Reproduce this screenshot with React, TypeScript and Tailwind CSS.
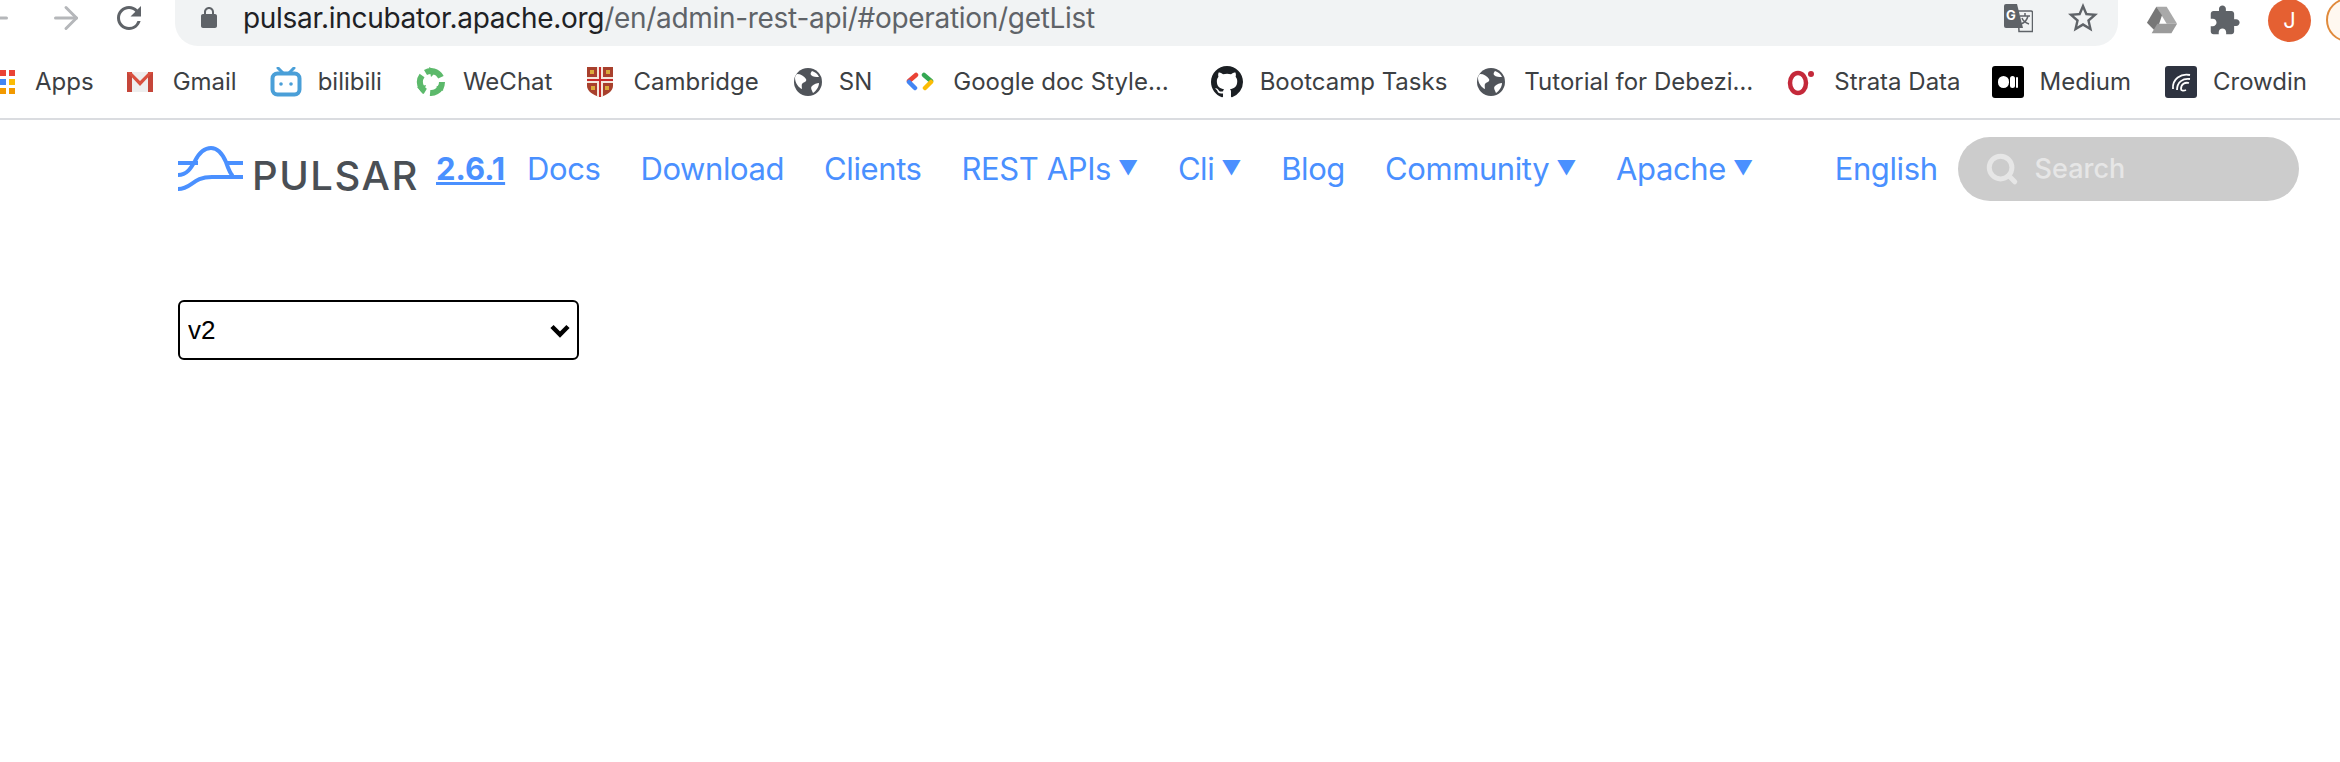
import React from 'react';
import { ArrowLeft, ArrowRight, Search } from 'lucide-react';

function Globe() {
  return (
    <svg width="28" height="28" viewBox="0 0 28 28">
      <circle cx="14" cy="14" r="14" fill="#50545a" />
      <path d="M3 6c4 0 7 2 9 5 1 2-1 3-3 4-2 1-1 4-1 6-3-1-7-6-7-11 0-2 1-3 2-4zM18 3c3 1 6 3 7 6-3 0-6 0-8-2-1-1 0-3 1-4zM25 15c0 4-3 8-6 10-1-3-3-5-1-7 2-2 5-3 7-3z" fill="#fff" />
    </svg>
  );
}

function AppsIcon() {
  const colors = ['#ea4335', '#ea4335', '#4285f4', '#fbbc05', '#f29900', '#f29900'];
  return (
    <div className="grid grid-cols-2 gap-[3px] w-[15px] -ml-[5px]">
      {colors.map((c, i) => (
        <div key={i} className="w-[6px] h-[6px]" style={{ background: c }} />
      ))}
    </div>
  );
}

function GmailIcon() {
  return (
    <svg width="28" height="24" viewBox="0 0 28 24">
      <path d="M1 2h26v20H1z" fill="#eee" />
      <path d="M1 2h5v20H1zM22 2h5v20h-5z" fill="#c5463a" />
      <path d="M1 2h4l9 9 9-9h4L14 16z" fill="#d9503f" />
    </svg>
  );
}

function BilibiliIcon() {
  return (
    <svg width="32" height="30" viewBox="0 0 32 30">
      <path d="M8 1l5 5M24 1l-5 5" stroke="#4a9fd8" strokeWidth="3" strokeLinecap="round" />
      <rect x="2.5" y="6.500" width="27" height="21" rx="5" fill="#fff" stroke="#4a9fd8" strokeWidth="4" />
      <circle cx="11" cy="17" r="1.800" fill="#4a9fd8" />
      <circle cx="21" cy="17" r="1.800" fill="#4a9fd8" />
    </svg>
  );
}

function WeChatIcon() {
  return (
    <svg width="32" height="30" viewBox="0 0 32 30" fill="none">
      <circle cx="16" cy="15" r="11" stroke="#5cb96b" strokeWidth="6" strokeDasharray="18 5" transform="rotate(-120 16 15)" />
      <path d="M14 0l8 4-6 6zM29 15l-1 9-7-4zM8 27l-6-7 9-2z" fill="#5cb96b" />
    </svg>
  );
}

function CambridgeIcon() {
  return (
    <svg width="28" height="32" viewBox="0 0 28 32">
      <path d="M1 1h26v19c0 5-6 9-13 11C7 29 1 25 1 20z" fill="#a8402c" />
      <path d="M11 1h6v30h-6zM1 11h26v6H1z" fill="#f3e7dc" />
      <path d="M13 1h2v30h-2zM1 13h26v2H1z" fill="#c62b2b" />
      <path d="M4 4h4v4H4zM20 4h4v4h-4zM5 20h4v4H5zM19 20h4v4h-4z" fill="#d9aa3a" />
    </svg>
  );
}

function GoogleDocIcon() {
  return (
    <svg width="28" height="20" viewBox="0 0 28 20" fill="none" strokeWidth="4.500" strokeLinecap="round">
      <path d="M10 3L3 9" stroke="#ea4335" />
      <path d="M3 10l6 6" stroke="#4285f4" />
      <path d="M18 3l7 6" stroke="#34a853" />
      <path d="M25 10l-6 6" stroke="#fbbc05" />
    </svg>
  );
}

function GithubIcon() {
  return (
    <svg width="32" height="32" viewBox="0 0 16 16" fill="#1b1f23">
      <path d="M8 0C3.580 0 0 3.580 0 8c0 3.540 2.290 6.530 5.470 7.590.4.070.55-.17.55-.38 0-.19-.01-.82-.01-1.490-2.010.37-2.530-.49-2.690-.94-.09-.23-.48-.94-.82-1.130-.28-.15-.68-.52-.01-.53.63-.01 1.080.58 1.230.82.720 1.210 1.870.870 2.330.660.070-.520.280-.870.510-1.070-1.780-.2-3.640-.89-3.640-3.950 0-.870.310-1.590.820-2.150-.080-.2-.36-1.020.080-2.120 0 0 .670-.210 2.200.820.640-.180 1.320-.270 2-.270s1.360.090 2 .270c1.530-1.040 2.200-.820 2.200-.820.440 1.100.160 1.920.080 2.120.510.560.820 1.270.820 2.150 0 3.070-1.870 3.750-3.650 3.950.290.250.540.730.540 1.480 0 1.070-.010 1.930-.010 2.200 0 .210.150.460.550.380A8.010 8.010 0 0016 8c0-4.420-3.580-8-8-8z" />
    </svg>
  );
}

function StrataIcon() {
  return (
    <svg width="28" height="28" viewBox="0 0 28 28">
      <ellipse cx="11" cy="15" rx="8" ry="10" fill="none" stroke="#c4293a" strokeWidth="4.500" />
      <circle cx="24" cy="6" r="3" fill="#c4293a" />
    </svg>
  );
}

function MediumIcon() {
  return (
    <div className="flex items-center justify-center gap-[1px] w-[32px] h-[32px] bg-black rounded-[3px]">
      <div className="w-[11px] h-[12px] rounded-full bg-white" />
      <div className="w-[5px] h-[12px] rounded-full bg-white" />
      <div className="w-[2px] h-[11px] rounded-full bg-white" />
    </div>
  );
}

function CrowdinIcon() {
  return (
    <div className="flex items-center justify-center w-[32px] h-[32px] bg-[#2e3340] rounded-[3px]">
      <svg width="24" height="24" viewBox="0 0 24 24" fill="none" stroke="#fff" strokeWidth="1.800">
        <path d="M21 5C12 3 3 9 4 19" />
        <path d="M21 9C14 8 8 12 8 20" />
        <path d="M20 13c-4-1-8 1-8 6 0 2 3 2 5 1" />
      </svg>
    </div>
  );
}

function PulsarLogo() {
  return (
    <svg width="65" height="46" viewBox="0 0 65 46" fill="none" stroke="#4a90ff" strokeWidth="4" className="shrink-0">
      <path d="M0 17h20M47 17h18" />
      <path d="M0 29c9 0 13-7 17-14 4-8 9-13 16-13 8 0 12 7 15 14 2 6 4 12 7 14" />
      <path d="M0 43c14 0 14-12 34-12h31" />
    </svg>
  );
}

function TranslateIcon() {
  return (
    <svg width="29" height="30" viewBox="0 0 29 30">
      <path d="M14 8h13a1.500 1.500 0 011.500 1.500V28.500H15z" fill="#f1f3f4" stroke="#5f6368" strokeWidth="1.500" />
      <path d="M2 1h11l6 24H2a2 2 0 01-2-2V3a2 2 0 012-2z" fill="#5f6368" />
      <path d="M16 13h10M21 10v3M24 13c-1 4-4 7-7 8M18 15c1 3 4 5 7 6" stroke="#5f6368" strokeWidth="1.500" fill="none" />
      <text x="2" y="17" fontSize="13" fontWeight="700" fill="#fff">G</text>
    </svg>
  );
}

function DriveIcon() {
  return (
    <svg width="32" height="30" viewBox="0 0 34 30" className="ml-[28px] shrink-0">
      <path d="M11 1h11l11 18H22z" fill="#a9a9a9" />
      <path d="M11 1l6 9-6 18-10-10z" fill="#777" />
      <path d="M12 19h21l-6 10H6z" fill="#9b9b9b" />
    </svg>
  );
}

function Caret() {
  return <span className="text-[20px] ml-[7px] relative top-[-1px]">▼</span>;
}

const bookmarks = [
  { label: 'Apps', icon: <AppsIcon />, ml: '', gap: 'gap-[20px]' },
  { label: 'Gmail', icon: <GmailIcon />, ml: 'ml-[32px]', gap: 'gap-[19px]' },
  { label: 'bilibili', icon: <BilibiliIcon />, ml: 'ml-[33px]', gap: 'gap-[16px]' },
  { label: 'WeChat', icon: <WeChatIcon />, ml: 'ml-[33px]', gap: 'gap-[16px]' },
  { label: 'Cambridge', icon: <CambridgeIcon />, ml: 'ml-[34px]', gap: 'gap-[19px]' },
  { label: 'SN', icon: <Globe />, ml: 'ml-[35px]', gap: 'gap-[17px]' },
  { label: 'Google doc Style…', icon: <GoogleDocIcon />, ml: 'ml-[34px]', gap: 'gap-[19px]' },
  { label: 'Bootcamp Tasks', icon: <GithubIcon />, ml: 'ml-[42px]', gap: 'gap-[17px]' },
  { label: 'Tutorial for Debezi…', icon: <Globe />, ml: 'ml-[30px]', gap: 'gap-[19px]' },
  { label: 'Strata Data', icon: <StrataIcon />, ml: 'ml-[34px]', gap: 'gap-[19px]' },
  { label: 'Medium', icon: <MediumIcon />, ml: 'ml-[31px]', gap: 'gap-[16px]' },
  { label: 'Crowdin', icon: <CrowdinIcon />, ml: 'ml-[34px]', gap: 'gap-[16px]' },
];

const navItems = [
  { label: 'Docs', caret: false },
  { label: 'Download', caret: false },
  { label: 'Clients', caret: false },
  { label: 'REST APIs', caret: true },
  { label: 'Cli', caret: true },
  { label: 'Blog', caret: false },
  { label: 'Community', caret: true },
  { label: 'Apache', caret: true },
];

export default function App() {
  return (
    <div className='w-[2340px] h-[762px] bg-white overflow-hidden font-["Inter","Noto_Sans",sans-serif]'>
      {/* Browser toolbar */}
      <div className="flex h-[46px]">
        <div className="flex items-center w-[175px] shrink-0 pb-[10px] text-[#b5b7ba]">
          <ArrowLeft size={36} strokeWidth={2} className="-ml-[22px] shrink-0" />
          <ArrowRight size={36} strokeWidth={2} className="ml-[34px] shrink-0" />
          <svg width="36" height="36" viewBox="0 0 24 24" fill="#5f6368" className="ml-[27px] shrink-0">
            <path d="M17.65 6.35A7.958 7.958 0 0012 4c-4.420 0-7.990 3.580-7.990 8s3.570 8 7.990 8c3.730 0 6.840-2.550 7.730-6h-2.080A5.990 5.990 0 0112 18c-3.310 0-6-2.690-6-6s2.690-6 6-6c1.660 0 3.140.690 4.220 1.780L13 11h7V4l-2.350 2.350z" />
          </svg>
        </div>
        <div className="flex items-center w-[1943px] shrink-0 bg-[#f1f3f4] rounded-b-[23px] pb-[10px] pl-[22px] pr-[17px]">
          <svg width="24" height="24" viewBox="0 0 24 24" fill="#5f6368" className="shrink-0">
            <path d="M18 8h-1V6c0-2.760-2.240-5-5-5S7 3.240 7 6v2H6c-1.100 0-2 .900-2 2v10c0 1.100.900 2 2 2h12c1.100 0 2-.900 2-2V10c0-1.100-.900-2-2-2zM9 6c0-1.660 1.340-3 3-3s3 1.340 3 3v2H9V6z" />
          </svg>
          <div className="ml-[22px] text-[28px] leading-none tracking-[-0.3px] whitespace-nowrap">
            <span className="text-[#202124]">pulsar.incubator.apache.org</span>
            <span className="text-[#5f6368]">/en/admin-rest-api/#operation/getList</span>
          </div>
          <div className="ml-auto mr-[32px] shrink-0">
            <TranslateIcon />
          </div>
          <svg width="36" height="36" viewBox="0 0 24 24" fill="#5f6368" className="shrink-0">
            <path d="M22 9.240l-7.190-.620L12 2 9.190 8.630 2 9.240l5.460 4.730L5.820 21 12 17.270 18.180 21l-1.630-7.030L22 9.240zM12 15.400l-3.760 2.270 1-4.280-3.320-2.880 4.380-.380L12 6.100l1.710 4.040 4.380.380-3.320 2.880 1 4.280L12 15.400z" />
          </svg>
        </div>
        <div className="flex items-center pb-[6px]">
          <DriveIcon />
          <svg width="33" height="33" viewBox="0 0 24 24" fill="#5f6368" className="ml-[30px] shrink-0">
            <path d="M20.500 11H19V7c0-1.100-.900-2-2-2h-4V3.500C13 2.120 11.880 1 10.500 1S8 2.120 8 3.500V5H4c-1.100 0-1.990.900-1.990 2v3.800H3.500c1.490 0 2.700 1.210 2.700 2.700s-1.210 2.700-2.700 2.700H2V20c0 1.100.900 2 2 2h3.800v-1.500c0-1.490 1.210-2.700 2.700-2.700s2.700 1.210 2.700 2.700V22H17c1.100 0 2-.900 2-2v-4h1.500c1.380 0 2.500-1.120 2.500-2.500S21.880 11 20.500 11z" />
          </svg>
          <div className="flex items-center justify-center w-[43px] h-[43px] ml-[27px] shrink-0 rounded-full bg-[#e56032] text-white text-[22px]">J</div>
          <div className="w-[44px] h-[44px] ml-[15px] shrink-0 rounded-full border-2 border-[#e08a3c] bg-[#fff8f0]" />
        </div>
      </div>

      {/* Bookmarks bar */}
      <div className="flex items-center h-[74px] border-b-2 border-[#dadce0] pl-[5px] text-[24px] text-[#3c4043]">
        {bookmarks.map((b) => (
          <div key={b.label} className={`flex items-center shrink-0 ${b.ml} ${b.gap}`}>
            {b.icon}
            <span className="whitespace-nowrap">{b.label}</span>
          </div>
        ))}
      </div>

      {/* Site header */}
      <div className="flex items-center h-[66px] mt-[16px] pl-[178px] text-[#4a90ff] text-[31px] tracking-[-0.4px]">
        <div className="flex items-center w-[258px] shrink-0">
          <PulsarLogo />
          <span className="ml-[9px] mt-[13px] text-[#4a4f55] text-[40px] leading-none tracking-[1.5px] font-medium">PULSAR</span>
        </div>
        <span className="w-[91px] shrink-0 font-bold underline tracking-normal">2.6.1</span>
        <div className="flex items-center gap-[40px] shrink-0">
          {navItems.map((item) => (
            <div key={item.label} className="flex items-center whitespace-nowrap">
              {item.label}
              {item.caret && <Caret />}
            </div>
          ))}
        </div>
        <span className="ml-[82px] shrink-0">English</span>
        <div className="flex items-center w-[341px] h-[64px] ml-[20px] shrink-0 rounded-full bg-[#cccccc] pl-[27px] text-[#e6e6e6]">
          <Search size={34} strokeWidth={3.500} className="shrink-0" />
          <span className="ml-[16px] text-[27px] font-medium tracking-normal">Search</span>
        </div>
      </div>

      {/* Version select */}
      <div className="pl-[178px] mt-[98px]">
        <div className="relative w-[401px] h-[60px]">
          <select className='w-full h-full appearance-none border-2 border-black rounded-[6px] bg-white text-black pl-[8px] text-[26px] font-["Liberation_Sans",sans-serif]'>
            <option>v2</option>
          </select>
          <svg width="20" height="14" viewBox="0 0 20 14" fill="none" stroke="black" strokeWidth="4.500" className="absolute right-[9px] top-[24px] pointer-events-none">
            <path d="M2 2.500l8 8 8-8" />
          </svg>
        </div>
      </div>
    </div>
  );
}
